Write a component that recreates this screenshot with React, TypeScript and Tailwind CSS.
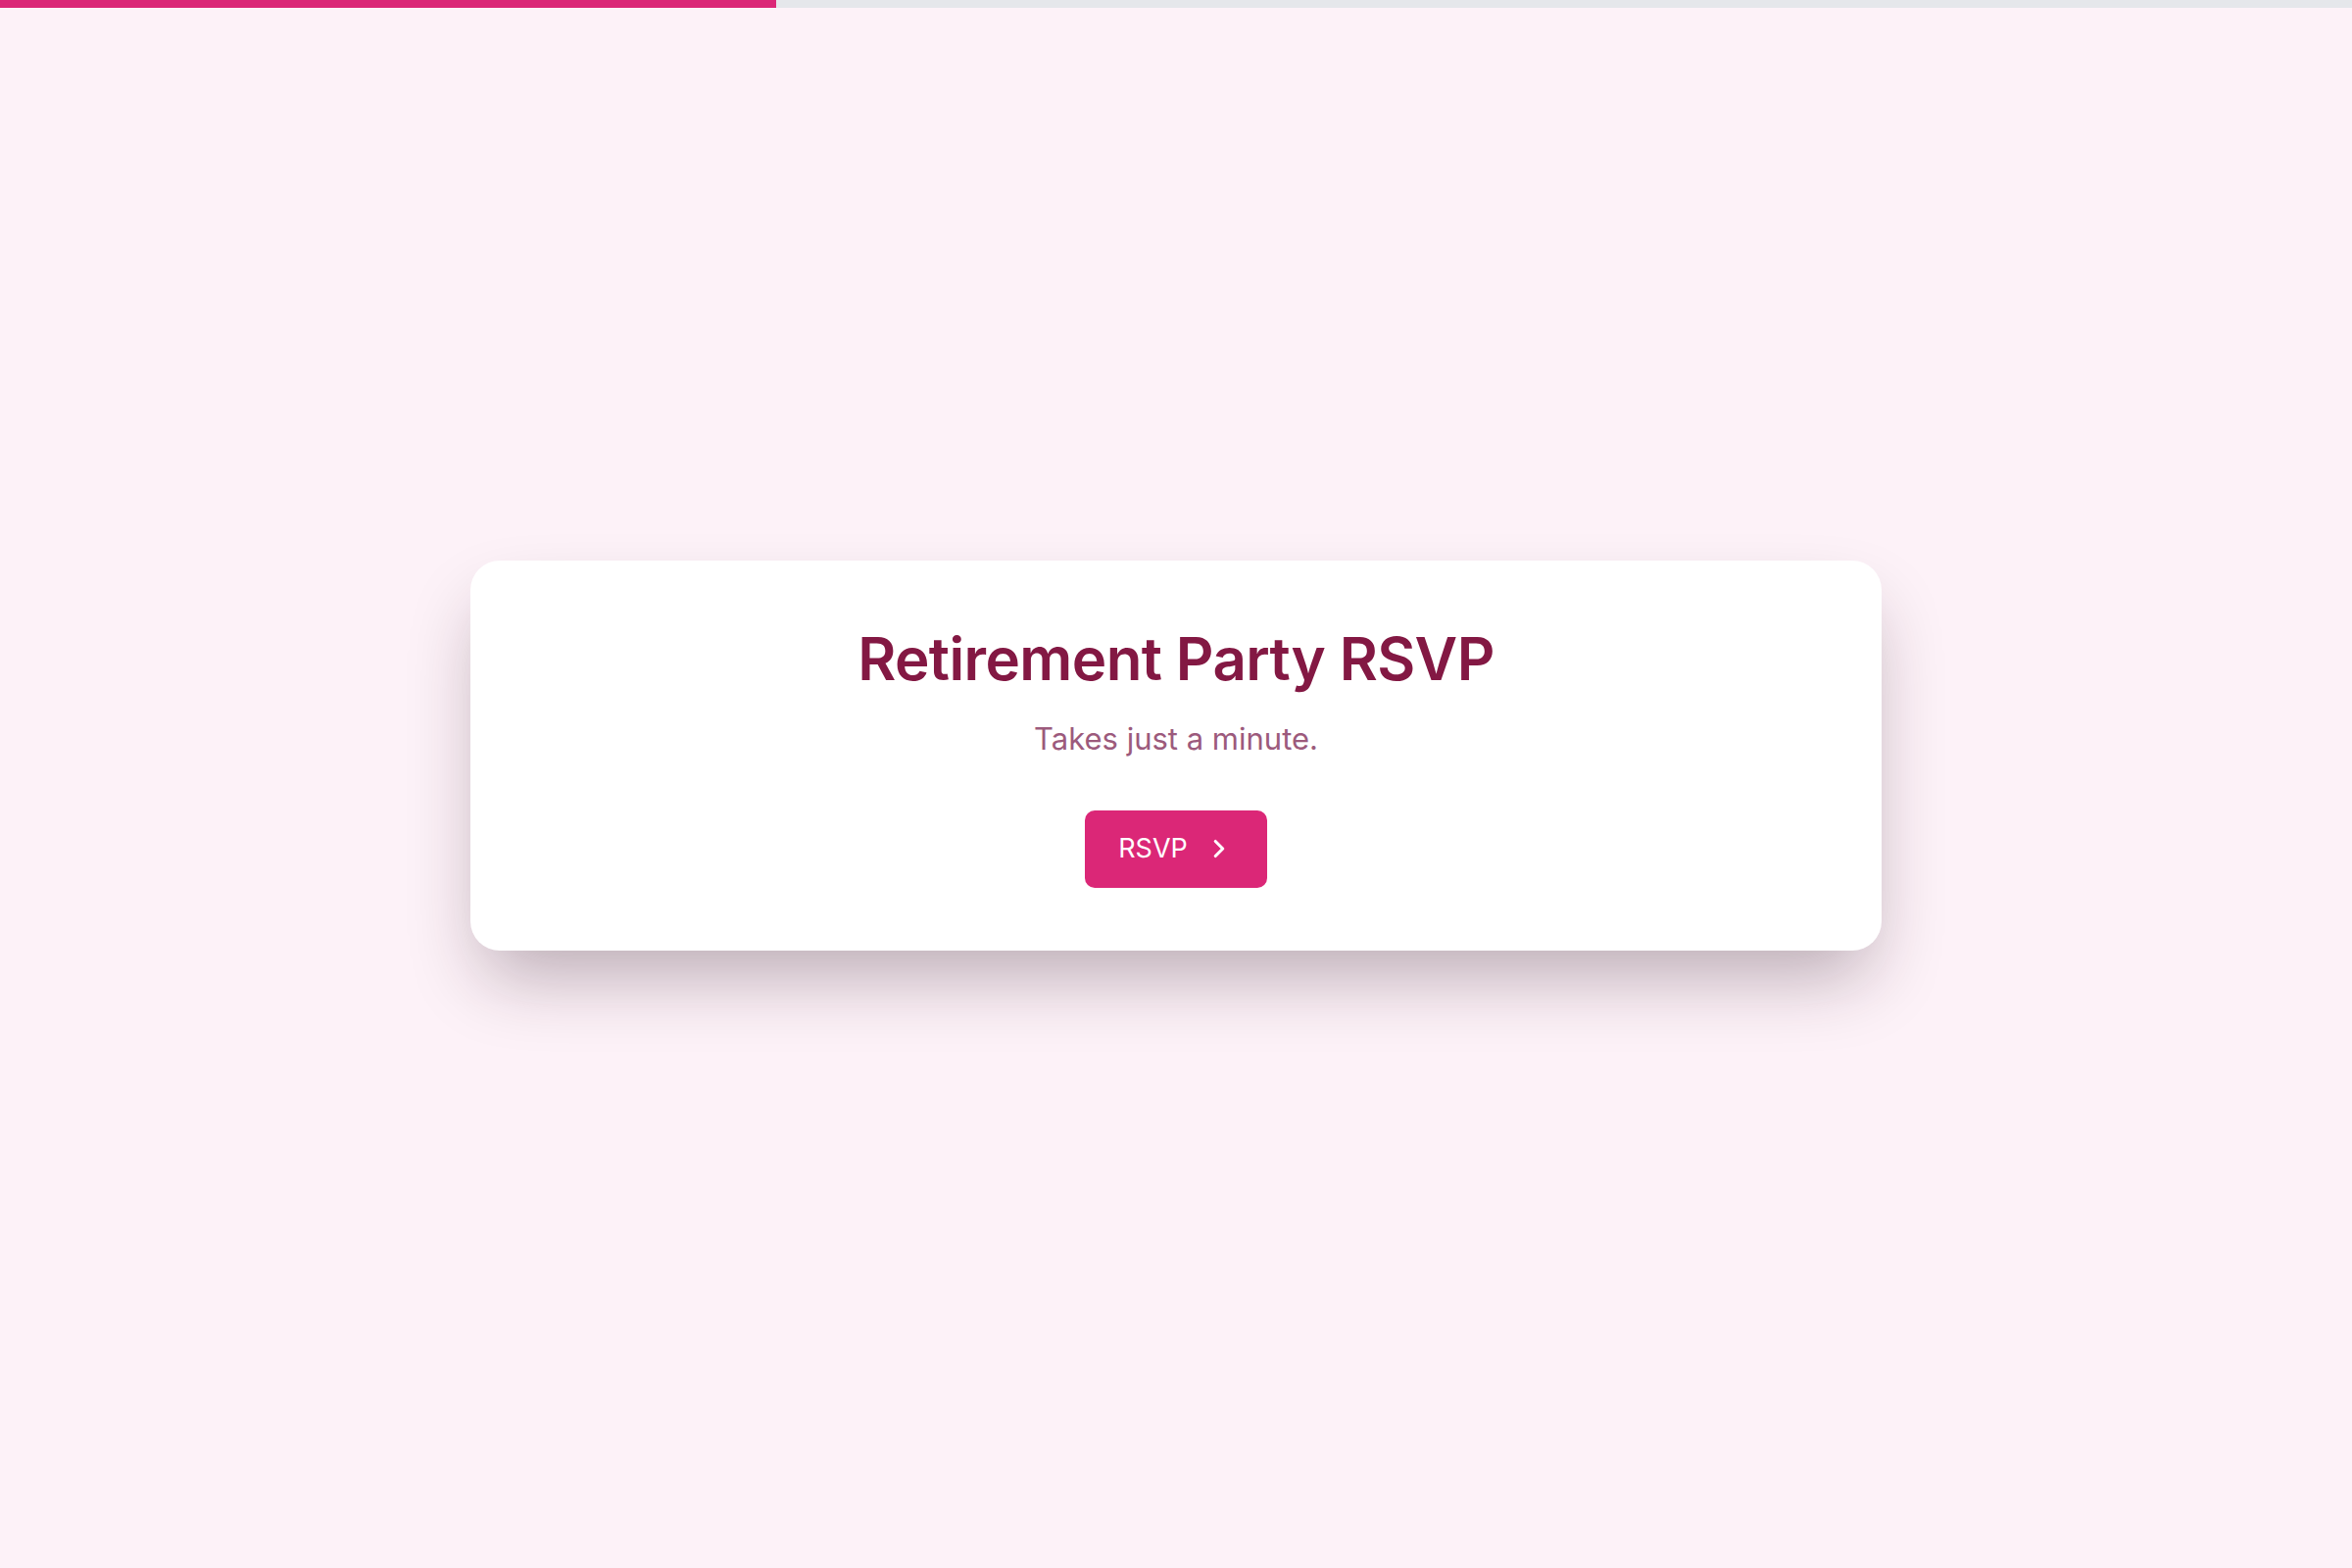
import { ChevronRight } from "lucide-react";

export default function App() {
  const progress = 33;

  return (
    <div
      className="min-h-screen flex flex-col bg-[#fdf2f8]"
      style={{ fontFamily: "Inter, 'Noto Sans', sans-serif" }}
    >
      <div className="h-2 w-full bg-[#e5e7eb]">
        <div className="h-full bg-[#db2777]" style={{ width: `${progress}%` }} />
      </div>

      <main className="flex-1 flex items-center justify-center px-6 pb-[67px]">
        <div className="w-full max-w-[1440px] bg-white rounded-[30px] px-16 pt-[63px] pb-[64px] flex flex-col items-center text-center shadow-[0_38px_76px_-14px_rgba(40,15,30,0.32)]">
          <h1 className="text-[60px] leading-[75px] font-semibold tracking-[-0.01em] text-[#831843]">
            Retirement Party RSVP
          </h1>
          <p className="mt-[21px] text-[31px] leading-[45px] text-[#9c5a7c]">
            Takes just a minute.
          </p>
          <button className="mt-[51px] h-[79px] px-[34px] rounded-[10px] bg-[#db2777] text-white text-[27px] flex items-center gap-[17px]">
            RSVP
            <ChevronRight size={30} strokeWidth={2.5} />
          </button>
        </div>
      </main>
    </div>
  );
}
